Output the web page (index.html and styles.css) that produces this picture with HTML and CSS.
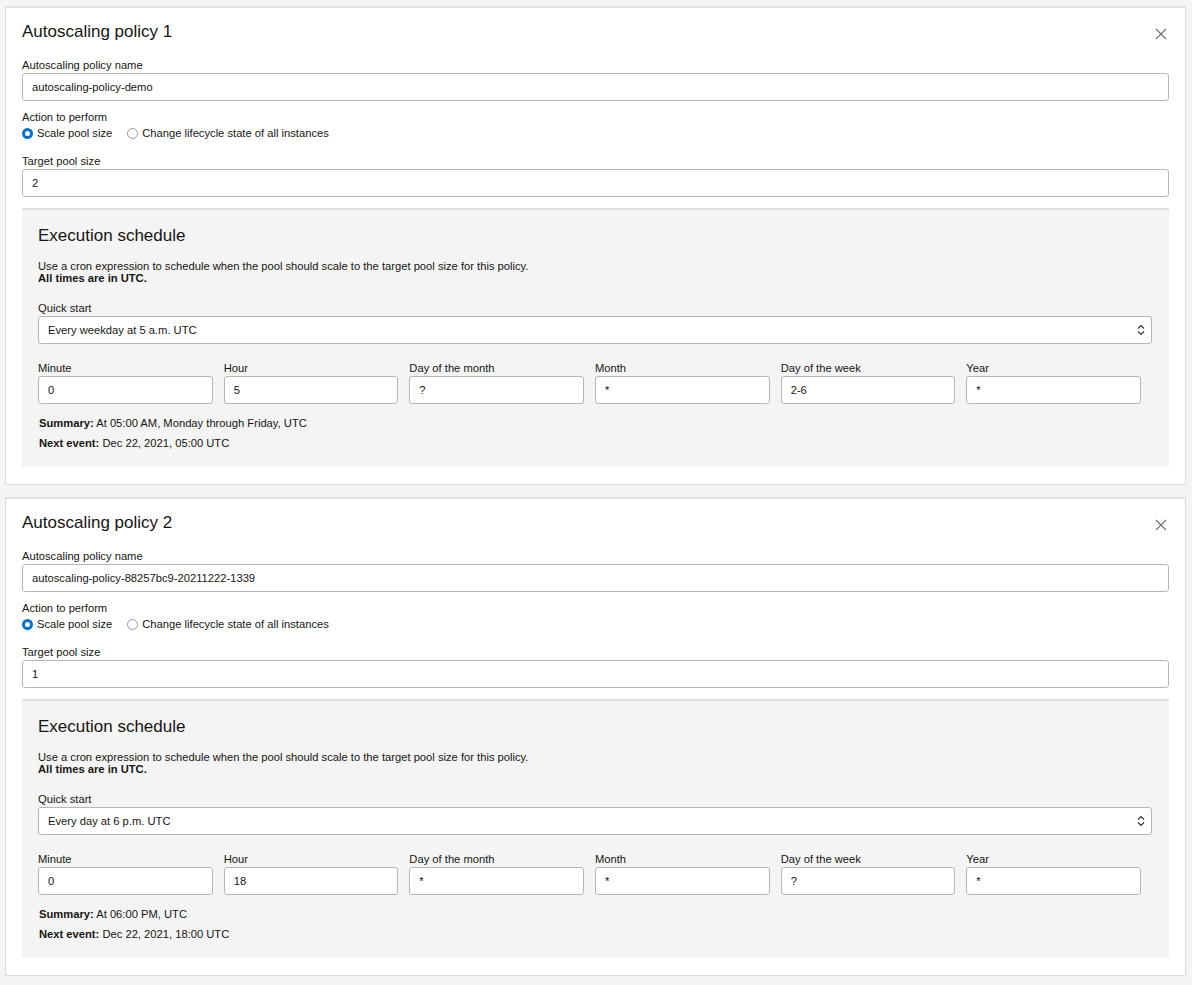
FILE: index.html
```html
<!DOCTYPE html>
<html>
<head>
<meta charset="utf-8">
<link rel="stylesheet" href="styles.css">
</head>
<body>
<div class="card">
  <div class="card-head">
    <h2 class="card-title">Autoscaling policy 1</h2>
    <span class="close"><svg width="12" height="12" viewBox="0 0 12 12"><path d="M1 1L11 11M11 1L1 11" stroke="#6f6f6f" stroke-width="1.1" fill="none"/></svg></span>
  </div>
  <label class="lbl">Autoscaling policy name</label>
  <div class="input">autoscaling-policy-demo</div>
  <label class="lbl lbl-action">Action to perform</label>
  <div class="radios">
    <span class="radio"><span class="dot on"></span>Scale pool size</span>
    <span class="radio"><span class="dot"></span>Change lifecycle state of all instances</span>
  </div>
  <label class="lbl lbl-target">Target pool size</label>
  <div class="input">2</div>
  <div class="sched">
    <h3 class="sched-title">Execution schedule</h3>
    <p class="desc">Use a cron expression to schedule when the pool should scale to the target pool size for this policy.<br><b>All times are in UTC.</b></p>
    <label class="lbl">Quick start</label>
    <div class="select">Every weekday at 5 a.m. UTC<svg class="arrows" width="8" height="12" viewBox="0 0 8 12"><path d="M1 4.5L4 1.5L7 4.5M1 7.5L4 10.5L7 7.5" stroke="#333" stroke-width="1.2" fill="none"/></svg></div>
    <div class="cron">
      <div class="field"><label class="lbl">Minute</label><div class="input">0</div></div>
      <div class="field"><label class="lbl">Hour</label><div class="input">5</div></div>
      <div class="field"><label class="lbl">Day of the month</label><div class="input">?</div></div>
      <div class="field"><label class="lbl">Month</label><div class="input">*</div></div>
      <div class="field"><label class="lbl">Day of the week</label><div class="input">2-6</div></div>
      <div class="field"><label class="lbl">Year</label><div class="input">*</div></div>
    </div>
    <p class="sum"><b>Summary:</b> At 05:00 AM, Monday through Friday, UTC</p>
    <p class="sum"><b>Next event:</b> Dec 22, 2021, 05:00 UTC</p>
  </div>
</div>
<div class="card">
  <div class="card-head">
    <h2 class="card-title">Autoscaling policy 2</h2>
    <span class="close"><svg width="12" height="12" viewBox="0 0 12 12"><path d="M1 1L11 11M11 1L1 11" stroke="#6f6f6f" stroke-width="1.1" fill="none"/></svg></span>
  </div>
  <label class="lbl">Autoscaling policy name</label>
  <div class="input">autoscaling-policy-88257bc9-20211222-1339</div>
  <label class="lbl lbl-action">Action to perform</label>
  <div class="radios">
    <span class="radio"><span class="dot on"></span>Scale pool size</span>
    <span class="radio"><span class="dot"></span>Change lifecycle state of all instances</span>
  </div>
  <label class="lbl lbl-target">Target pool size</label>
  <div class="input">1</div>
  <div class="sched">
    <h3 class="sched-title">Execution schedule</h3>
    <p class="desc">Use a cron expression to schedule when the pool should scale to the target pool size for this policy.<br><b>All times are in UTC.</b></p>
    <label class="lbl">Quick start</label>
    <div class="select">Every day at 6 p.m. UTC<svg class="arrows" width="8" height="12" viewBox="0 0 8 12"><path d="M1 4.5L4 1.5L7 4.5M1 7.5L4 10.5L7 7.5" stroke="#333" stroke-width="1.2" fill="none"/></svg></div>
    <div class="cron">
      <div class="field"><label class="lbl">Minute</label><div class="input">0</div></div>
      <div class="field"><label class="lbl">Hour</label><div class="input">18</div></div>
      <div class="field"><label class="lbl">Day of the month</label><div class="input">*</div></div>
      <div class="field"><label class="lbl">Month</label><div class="input">*</div></div>
      <div class="field"><label class="lbl">Day of the week</label><div class="input">?</div></div>
      <div class="field"><label class="lbl">Year</label><div class="input">*</div></div>
    </div>
    <p class="sum"><b>Summary:</b> At 06:00 PM, UTC</p>
    <p class="sum"><b>Next event:</b> Dec 22, 2021, 18:00 UTC</p>
  </div>
</div>
</body>
</html>
```
FILE: styles.css
```css
* { box-sizing: border-box; }
body {
  margin: 0;
  padding: 6px 6px 0 5px;
  background: #f5f5f5;
  font-family: "Liberation Sans", Arial, sans-serif;
  font-size: 11.2px;
  color: #161513;
}
.card {
  background: #fff;
  border: 1px solid #dcdcdc;
  border-top: 2px solid #e2e2e4;
  padding: 12px 16px 17px 16px;
  margin-bottom: 12px;
}
.card-head {
  display: flex;
  justify-content: space-between;
  align-items: center;
  height: 24px;
  margin-bottom: 14px;
}
.card-title {
  margin: 0;
  font-size: 17px;
  font-weight: normal;
  line-height: 22px;
}
.close {
  display: flex;
  margin-right: 2px;
  margin-top: 4px;
}
.lbl {
  display: block;
  line-height: 14px;
  margin-bottom: 1px;
}
.lbl-action { margin-top: 9px; margin-bottom: 0; }
.lbl-target { margin-top: 12px; }
.input, .select {
  height: 28px;
  border: 1px solid #b3b7bd;
  border-radius: 3px;
  background: #fff;
  padding: 0 9px;
  display: flex;
  align-items: center;
  line-height: 14px;
}
.radios {
  display: flex;
  gap: 15px;
  height: 18px;
  align-items: center;
}
.radio {
  display: flex;
  align-items: center;
}
.dot {
  width: 11px;
  height: 11px;
  border-radius: 50%;
  border: 1px solid #9a9a9a;
  background: #fff;
  margin-right: 4px;
}
.dot.on {
  border: 3px solid #0572ce;
  background: #fff;
}
.sched {
  margin-top: 11px;
  background: #f4f4f4;
  border-top: 2px solid #e0e0e0;
  padding: 15px 17px 14px 17px;
}
.sched-title {
  margin: 0 0 13px -1px;
  font-size: 17px;
  font-weight: normal;
  line-height: 22px;
}
.desc {
  margin: 0 0 17px -1px;
  line-height: 12px;
}
.select {
  justify-content: space-between;
  padding-right: 6px;
  margin-left: -1px;
}
.sched > .lbl { margin-left: -1px; }
.cron {
  display: grid;
  grid-template-columns: repeat(6, 1fr);
  margin: 17px 0 9px -1px;
}
.field { padding-right: 11px; }
.sum {
  margin: 0;
  line-height: 20px;
}
```
